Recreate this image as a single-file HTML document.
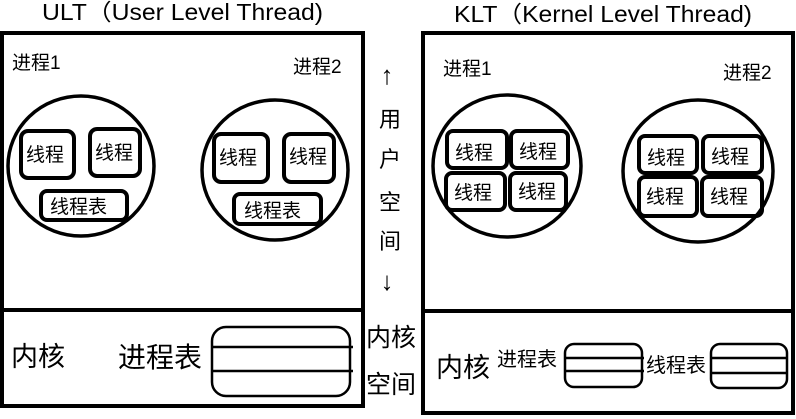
<!DOCTYPE html>
<html><head><meta charset="utf-8"><style>
html,body{margin:0;padding:0;background:#fff;width:796px;height:419px;overflow:hidden}
svg{display:block}
text{font-family:"Liberation Sans","Noto Sans CJK SC",sans-serif;fill:#000}
</style></head><body>
<svg width="796" height="419" viewBox="0 0 796 419" xmlns="http://www.w3.org/2000/svg">
<g fill="none" stroke="#000">
<rect x="2" y="33" width="361" height="373" stroke-width="4"/>
<line x1="2" y1="310" x2="363" y2="310" stroke-width="4"/>
<ellipse cx="81" cy="166" rx="73" ry="70" stroke-width="3.5"/>
<rect x="21" y="131" width="53" height="47" rx="7" stroke-width="4"/>
<rect x="90" y="129" width="50" height="47" rx="7" stroke-width="4"/>
<rect x="41" y="191" width="86" height="29" rx="6" stroke-width="4"/>
<ellipse cx="275" cy="170" rx="73" ry="70" stroke-width="3.5"/>
<rect x="214" y="134" width="54" height="48" rx="7" stroke-width="4"/>
<rect x="284" y="134" width="50" height="48" rx="7" stroke-width="4"/>
<rect x="234" y="194" width="87" height="30" rx="6" stroke-width="4"/>
<rect x="212" y="327" width="138" height="69" rx="14" stroke-width="2.5"/>
<line x1="212" y1="347" x2="353" y2="347" stroke-width="2.5"/>
<line x1="212" y1="371" x2="353" y2="371" stroke-width="2.5"/>
<rect x="423" y="33" width="370" height="380" stroke-width="4"/>
<line x1="423" y1="311" x2="793" y2="311" stroke-width="4"/>
<ellipse cx="507" cy="166" rx="74" ry="71" stroke-width="3.5"/>
<rect x="447" y="131" width="60" height="37" rx="6" stroke-width="4"/>
<rect x="511" y="131" width="57" height="37" rx="6" stroke-width="4"/>
<rect x="446" y="173" width="59" height="37" rx="6" stroke-width="4"/>
<rect x="510" y="173" width="56" height="37" rx="6" stroke-width="4"/>
<ellipse cx="698" cy="171" rx="75" ry="71" stroke-width="3.5"/>
<rect x="639" y="136" width="58" height="37" rx="6" stroke-width="4"/>
<rect x="703" y="136" width="59" height="37" rx="6" stroke-width="4"/>
<rect x="639" y="177" width="58" height="39" rx="6" stroke-width="4"/>
<rect x="702" y="177" width="60" height="39" rx="6" stroke-width="4"/>
<rect x="565" y="344" width="77" height="43" rx="9" stroke-width="2.5"/>
<line x1="565" y1="358" x2="644" y2="358" stroke-width="2.5"/>
<line x1="565" y1="371" x2="644" y2="371" stroke-width="2.5"/>
<rect x="711" y="344" width="76" height="44" rx="9" stroke-width="2.5"/>
<line x1="711" y1="358" x2="787" y2="358" stroke-width="2.5"/>
<line x1="711" y1="373" x2="787" y2="373" stroke-width="2.5"/>
</g>
<text x="42" y="20" font-size="23" textLength="281" lengthAdjust="spacingAndGlyphs">ULT（User Level Thread)</text>
<text x="454" y="22" font-size="23" textLength="298" lengthAdjust="spacingAndGlyphs">KLT（Kernel Level Thread)</text>
<g font-size="19">
<text x="12" y="69">进程1</text>
<text x="293" y="73">进程2</text>
<text x="443" y="75">进程1</text>
<text x="723" y="79">进程2</text>
<text x="26" y="161">线程</text>
<text x="95" y="159">线程</text>
<text x="50" y="213">线程表</text>
<text x="219" y="164">线程</text>
<text x="289" y="163">线程</text>
<text x="244" y="217">线程表</text>
<text x="455" y="159">线程</text>
<text x="519" y="158">线程</text>
<text x="454" y="199">线程</text>
<text x="518" y="198">线程</text>
<text x="647" y="164">线程</text>
<text x="711" y="163">线程</text>
<text x="646" y="203">线程</text>
<text x="710" y="203">线程</text>
</g>
<g font-size="22" text-anchor="middle">
<text x="387" y="84" font-size="26">↑</text>
<text x="390" y="127">用</text>
<text x="390" y="167">户</text>
<text x="390" y="210">空</text>
<text x="390" y="249">间</text>
<text x="387" y="290" font-size="26">↓</text>
</g>
<text x="366" y="346" font-size="25">内核</text>
<text x="366" y="393" font-size="25">空间</text>
<text x="11" y="366" font-size="27">内核</text>
<text x="118" y="367" font-size="28">进程表</text>
<text x="436" y="377" font-size="27">内核</text>
<text x="497" y="366" font-size="20">进程表</text>
<text x="646" y="372" font-size="20">线程表</text>
</svg>
</body></html>
